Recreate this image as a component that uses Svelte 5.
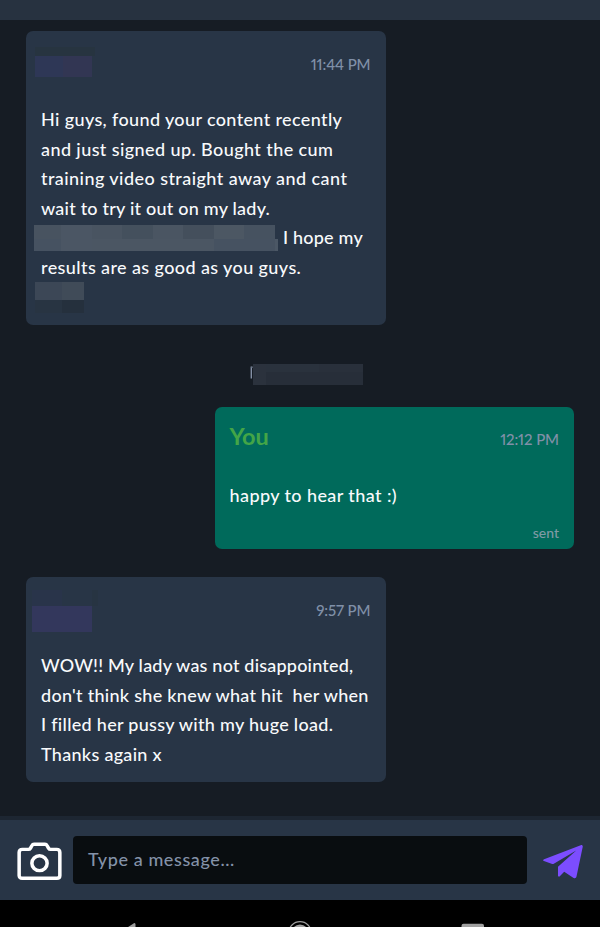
<script>
	// every line is set on its own row, spacing is letter-spacing in px
	const messages = [
		{
			id: 1,
			time: "11:44 PM",
			lines: [
				{ text: "Hi guys, found your content recently", spacing: 0.37 },
				{ text: "and just signed up. Bought the cum", spacing: 0.41 },
				{ text: "training video straight away and cant", spacing: 0.44 },
				{ text: "wait to try it out on my lady.", spacing: 0.22 },
				{ text: "I hope my", spacing: 0.2, mask: true },
				{ text: "results are as good as you guys.", spacing: 0.4 },
				{ text: "", spacing: 0, sign: true }
			]
		},
		{
			id: 2,
			mine: true,
			time: "12:12 PM",
			lines: [{ text: "happy to hear that :)", spacing: 0.41 }]
		},
		{
			id: 3,
			time: "9:57 PM",
			lines: [
				{ text: "WOW!! My lady was not disappointed,", spacing: 0.2 },
				{ text: "don't think she knew what hit  her when", spacing: 0.28 },
				{ text: "I filled her pussy with my huge load.", spacing: 0.29 },
				{ text: "Thanks again x", spacing: 0.3 }
			]
		}
	];
</script>

<main>
	<div class="topbar"></div>
	<section class="chat">
		{#each messages as m (m.id)}
			{#if m.mine}
				<!-- date between the messages, name is hidden -->
				<div class="date">
					<svg width="113" height="21" viewBox="0 0 113 21">
						<path d="M1.3 2.5v12" stroke="#8490a5" stroke-width="1.4" />
						<path d="M1.5 3.2h2" stroke="#56606f" stroke-width="1.4" />
						<rect x="3" width="110" height="21" fill="#272e39" />
						<rect x="3" width="13" height="21" fill="#2b323d" />
						<rect x="16" width="53" height="8" fill="#2a323d" />
						<rect x="69" width="44" height="8" fill="#29303b" />
					</svg>
				</div>
			{/if}
			<article class="bubble" class:mine={m.mine}>
				<header>
					{#if m.mine}
						<strong>You</strong>
					{:else if m.id == 1}
						<svg class="name" width="60" height="30" viewBox="0 0 60 30">
							<rect width="60" height="9" fill="#273440" />
							<rect y="9" width="28" height="21" fill="#2e3756" />
							<rect x="28" y="9" width="29" height="21" fill="#323653" />
						</svg>
					{:else}
						<svg class="name low" width="66" height="42" viewBox="0 0 66 42">
							<rect width="30" height="16" fill="#29344a" />
							<rect x="60" width="6" height="16" fill="#273442" />
							<rect y="16" width="60" height="26" fill="#33375c" />
						</svg>
					{/if}
					<time>{m.time}</time>
				</header>
				<div class="text">
					{#each m.lines as line}
						<p>
							{#if line.mask}
								<svg class="mask" width="244" height="26" viewBox="0 0 244 26">
									<rect width="241" height="26" fill="#465261" />
									<rect x="241" y="14" width="3" height="12" fill="#4b5765" />
									<rect width="27" height="14" fill="#485360" />
									<rect x="27" width="31" height="26" fill="#4b5664" />
									<rect x="58" width="30" height="14" fill="#495461" />
									<rect x="58" y="14" width="122" height="12" fill="#4b5663" />
									<rect x="88" width="31" height="14" fill="#44505d" />
									<rect x="119" width="30" height="14" fill="#4a5562" />
									<rect x="149" width="31" height="14" fill="#444f5c" />
									<rect x="180" width="30" height="14" fill="#4c5763" />
									<rect x="210" width="31" height="14" fill="#465260" />
								</svg>
							{/if}
							{#if line.sign}
								<svg class="sign" width="49" height="31" viewBox="0 0 49 31">
									<rect width="27" height="18" fill="#3c4756" />
									<rect x="27" width="22" height="18" fill="#404b58" />
									<rect y="18" width="27" height="13" fill="#283442" />
									<rect x="27" y="18" width="22" height="13" fill="#25303d" />
								</svg>
							{/if}
							<span style="letter-spacing:{line.spacing}px">{line.text}</span>
						</p>
					{/each}
				</div>
				{#if m.mine}
					<div class="status">sent</div>
				{/if}
			</article>
		{/each}
	</section>

	<footer>
		<svg class="camera" width="45" height="38" viewBox="0 0 46 40" preserveAspectRatio="none" fill="none" stroke="#fff" stroke-width="3.6" stroke-linejoin="round">
			<path d="M5.5 7.8h6.2c1.1 0 1.6-.5 2.1-1.4l1.5-2.7c.5-1 1-1.4 2.1-1.4h11.2c1.1 0 1.6.4 2.1 1.4l1.5 2.7c.5.9 1 1.4 2.1 1.4h6.2c2 0 3.3 1.3 3.3 3.3v24.1c0 1.8-1.2 3-3 3H5.2c-1.8 0-3-1.2-3-3V11.1c0-2 1.3-3.3 3.3-3.3z" />
			<circle cx="23" cy="22.3" r="7.8" />
		</svg>
		<div class="input">Type a message...</div>
		<svg class="send" width="40" height="34" viewBox="0 0 40 34" fill="#7c4dff">
			<path d="M1.1 14.2 37.7.2C39 -.2 40 .7 39.7 2L33.5 31.6c-.3 1.5-1.6 2.1-2.9 1.3L21.2 26.7 16.8 31.3c-.7.8-1.8.4-1.8-.7V21.8L33.2 5.5 10.8 18.8c-.5.3-1 .3-1.6.1L.9 16.1C-.2 15.7-.1 14.7 1.1 14.2z" />
		</svg>
	</footer>

	<!-- android buttons -->
	<nav>
		<svg width="600" height="27" viewBox="0 0 600 27">
			<path d="M122 31 133.5 23.4q2-1 2 1.2V31z" fill="#9b9b9b" />
			<circle cx="300" cy="33" r="11.3" fill="none" stroke="#a0a0a0" stroke-width="1.2" />
			<circle cx="300" cy="33" r="8.6" fill="#a0a0a0" />
			<rect x="461.5" y="23.7" width="22.5" height="20" rx="2" fill="#a0a0a0" />
		</svg>
	</nav>
</main>

<style>
	:global(body) {
		background: #161c24;
	}
	main {
		height: 927px;
		display: flex;
		flex-direction: column;
		overflow: hidden;
		font-family: Lato, "Open Sans", sans-serif;
		font-weight: 500;
		background: #161c24;
		color: #f8fafc;
	}
	.topbar {
		height: 20px;
		flex: none;
		background: #273240;
	}
	.chat {
		flex: 1;
		display: flex;
		flex-direction: column;
		align-items: flex-start;
		padding: 11px 26px 0;
	}
	.bubble {
		box-sizing: border-box;
		width: 359.5px;
		padding: 14px 15px 13px;
		border-radius: 7px;
		background: #283546;
		margin-bottom: 28.5px;
	}
	.mine {
		align-self: flex-end;
		background: #006a5b;
		padding-bottom: 6px;
	}
	header {
		height: 37px;
		display: flex;
		align-items: center;
		justify-content: space-between;
		margin-bottom: 23.2px;
	}
	.mine header {
		align-items: baseline;
		line-height: 30px;
	}
	strong {
		font-size: 23.5px;
		font-weight: 700;
		color: #43a547;
	}
	time {
		font-size: 15px;
		font-variant-numeric: proportional-nums;
		letter-spacing: -0.1px;
		color: #8090a8;
	}
	.name {
		margin: -3px 0 0 -6px;
	}
	.name.low {
		margin: 2px 0 0 -9px;
	}
	p {
		margin: 0;
		height: 29.5px;
		display: flex;
		align-items: center;
		font-size: 18px;
		line-height: 29.5px;
		white-space: pre;
	}
	.mask {
		margin: 0 5px 0 -7px;
	}
	.sign {
		margin: 2px 0 0 -6px;
	}
	.status {
		margin-top: 12.3px;
		text-align: right;
		font-size: 14px;
		line-height: 20px;
		color: #7f9aa5;
	}
	.date {
		align-self: center;
		height: 21px;
		margin: 10.5px 0 22px 13px;
	}
	.date svg {
		display: block;
	}
	footer {
		box-sizing: border-box;
		flex: none;
		height: 84px;
		display: flex;
		align-items: center;
		padding: 0 17px 0 17px;
		background: #283546;
		border-top: 4px solid #1d2632;
	}
	.camera {
		margin: 2px 11px 0 0;
	}
	.input {
		box-sizing: border-box;
		flex: 1;
		height: 48px;
		padding-left: 15px;
		margin-right: 16px;
		border-radius: 4px;
		background: #090d10;
		color: #8492a8;
		font-size: 18px;
		line-height: 47px;
		letter-spacing: 0.6px;
	}
	.send {
		margin-top: 4px;
	}
	nav {
		flex: none;
		height: 27px;
		background: #000;
	}
	nav svg {
		display: block;
	}
</style>
